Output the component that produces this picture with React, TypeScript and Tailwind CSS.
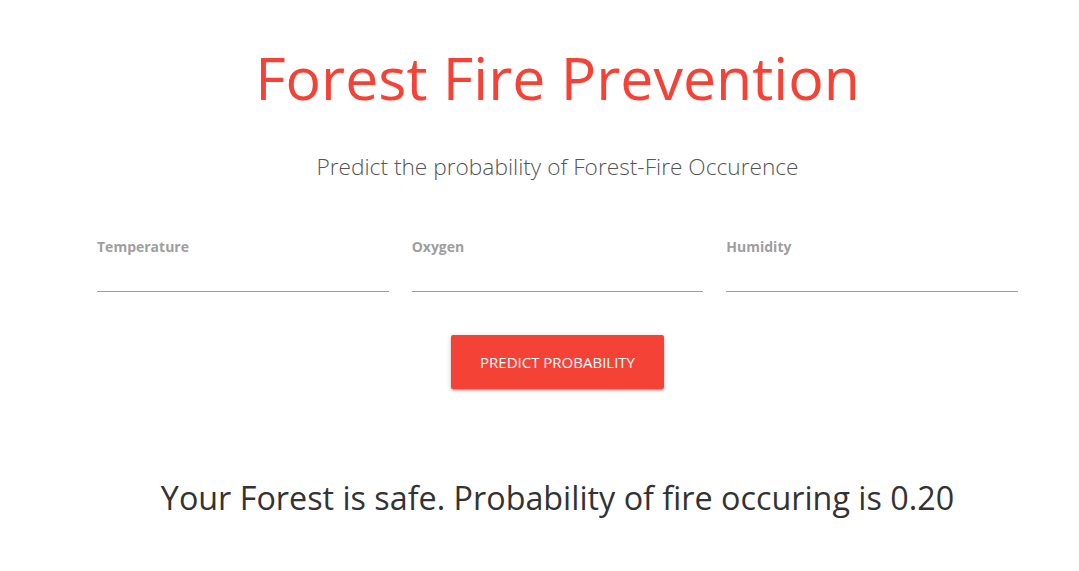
export default function App() {
  const fields = ["Temperature", "Oxygen", "Humidity"];
  return (
    <div className="w-[1079px] h-[571px] bg-white flex flex-col items-center pl-[36px]" style={{ fontFamily: '"Open Sans", "Noto Sans", sans-serif' }}>
      <h1 className="mt-[37px] text-[59px] leading-[80px] text-[#f44336] font-normal">Forest Fire Prevention</h1>
      <h2 className="mt-[35px] text-[22.7px] leading-[30px] font-light text-[#555]">Predict the probability of Forest-Fire Occurence</h2>
      <div className="mt-[56px] w-[921px] grid grid-cols-3 gap-x-[23px]">
        {fields.map((f) => (
          <div key={f} className="flex flex-col">
            <label className="text-[14px] font-bold text-[#9e9e9e] leading-[18px]">{f}</label>
            <div className="mt-[16px] h-[20px] border-b border-[#9e9e9e]" />
          </div>
        ))}
      </div>
      <button className="mt-[43px] w-[213px] h-[54px] bg-[#f44336] text-white text-[15px] rounded-[2px] shadow-[0_2px_2px_0_rgba(0,0,0,0.14),0_3px_1px_-2px_rgba(0,0,0,0.12),0_1px_5px_0_rgba(0,0,0,0.2)]">
        PREDICT PROBABILITY
      </button>
      <p className="mt-[88px] text-[32.3px] leading-[40px] text-[#333]">Your Forest is safe. Probability of fire occuring is 0.20</p>
    </div>
  );
}
